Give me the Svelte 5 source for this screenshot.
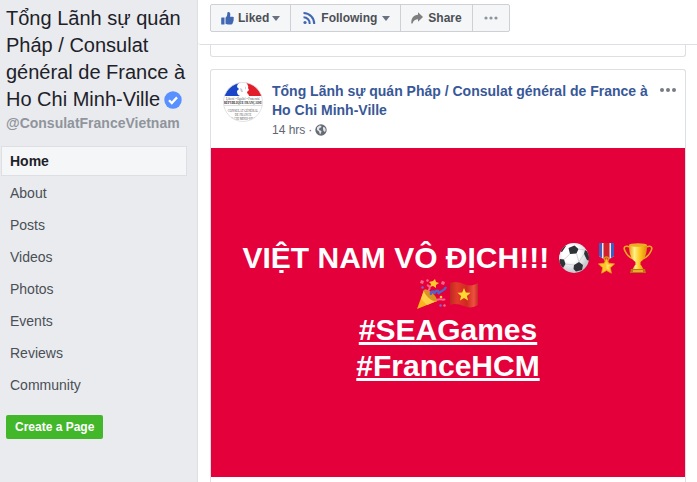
<script lang="ts">
	const pageName = 'Tổng Lãnh sự quán Pháp / Consulat général de France à Ho Chi Minh-Ville';
	const sections = ['Home', 'About', 'Posts', 'Videos', 'Photos', 'Events', 'Reviews', 'Community'];

	let current = $state('Home');
</script>

<svelte:head>
	<title>{pageName}</title>
</svelte:head>

<div class="page">
	<aside class="sidebar">
		<h1 class="page-name">
			{pageName}
			<svg class="verified" viewBox="0 0 18 18" role="img" aria-label="Verified">
				<circle cx="9" cy="9" r="8.7" fill="#5890ff" />
				<path d="M5 9.2l2.8 2.8 5.2-5.6" fill="none" stroke="#fff" stroke-width="2.3" />
			</svg>
		</h1>
		<a class="handle" href="#handle">@ConsulatFranceVietnam</a>

		<nav class="sections">
			{#each sections as section}
				<a
					href="#{section.toLowerCase()}"
					class="section"
					class:active={section === current}
					onclick={() => (current = section)}>{section}</a>
			{/each}
		</nav>

		<button type="button" class="create">Create a Page</button>
	</aside>

	<main class="main">
		<header class="toolbar">
			<div class="actions">
				<button type="button" class="action liked">
					<svg width="14" height="14" viewBox="0 0 14 14" fill="#4267b2" aria-hidden="true">
						<path d="M.8 6.500h2.700v7H.8q-.6 0-.6-.6V7.100q0-.6.6-.6z" />
						<path d="M4.500 6.800C6 5.700 6.300 4.200 6.300 2.300c0-1.900 3-1.700 3 .9 0 .9-.1 1.800-.3 2.500h2.600c1.500 0 1.700 1.800.7 2.300.8.6.6 1.700-.2 2 .5.7.2 1.600-.5 1.800.2.9-.4 1.700-1.300 1.700H7c-1 0-1.700-.4-2.500-.8z" />
					</svg>
					Liked
					<span class="caret"></span>
				</button>
				<button type="button" class="action following">
					<svg width="14" height="14" viewBox="0 0 14 14" fill="none" stroke="#4267b2" stroke-width="2" aria-hidden="true">
						<circle cx="3" cy="11.500" r="1.600" fill="#4267b2" stroke="none" />
						<path d="M1.500 6.300a6.200 6.200 0 0 1 6.200 6.700M1.500 2a10.600 10.600 0 0 1 10.700 11" />
					</svg>
					Following
					<span class="caret"></span>
				</button>
				<button type="button" class="action">
					<svg width="12" height="12" viewBox="0 0 12 12" fill="#7f7f7f" aria-hidden="true">
						<path d="M7 .3L12 5 7 9.700V7.200C4.500 7.200 2.400 8.500 1.500 11.500H.3C0 6.200 2.500 2.900 7 2.700z" />
					</svg>
					Share
				</button>
				<button type="button" class="action more" aria-label="More">
					<svg width="14" height="4" viewBox="0 0 14 4" fill="#8d949e" aria-hidden="true">
						<circle cx="2" cy="2" r="1.600" />
						<circle cx="7" cy="2" r="1.600" />
						<circle cx="12" cy="2" r="1.600" />
					</svg>
				</button>
			</div>
		</header>

		<div class="feed">
			<div class="previous"></div>

			<article class="post">
				<div class="post-header">
					<svg class="avatar" viewBox="0 0 40 40" aria-hidden="true">
						<defs>
							<clipPath id="round"><circle cx="20" cy="20" r="19.500" /></clipPath>
						</defs>
						<g clip-path="url(#round)">
							<rect width="40" height="40" fill="#fff" />
							<path d="M0 0h18c-3 1-4 3-4 5l2 2-2 2c0 3 1 4 3 5H0z" fill="#1c46c8" />
							<path d="M23 0h17v14H26c0-2-2-2-2-4l2-2-1-2c1-2-1-4-2-6z" fill="#e21e2b" />
							<path d="M17 6l2 1 1 3h-2zM22 4l1 2-1 2z" fill="#c4c9d3" />
							<text x="20" y="17.500" class="motto">Liberté • Égalité • Fraternité</text>
							<text x="20" y="22" class="republic">RÉPUBLIQUE FRANÇAISE</text>
							<path d="M1 23.500h38" stroke="#c8c8c8" stroke-width=".6" />
							<text x="20" y="30" class="office">CONSULAT GÉNÉRAL</text>
							<text x="20" y="34" class="office">DE FRANCE</text>
							<text x="20" y="38" class="office">HO CHI MINH-VILLE</text>
						</g>
						<circle cx="20" cy="20" r="19.500" fill="none" stroke="#dcdcdc" stroke-width=".8" />
					</svg>
					<div class="post-info">
						<a class="author" href="#author">{pageName}</a>
						<div class="meta">
							<a href="#post">14 hrs</a>
							<span>·</span>
							<svg width="12" height="12" viewBox="0 0 12 12" role="img" aria-label="Public">
								<circle cx="6" cy="6" r="5.700" fill="#666c76" />
								<path d="M2 3.500l2.500-2 2 .5-.5 1.500-1.500.5L4 6l2.500 1-.5 2-1 1.500-1-3-2-1.500zM8 3l2 .5.8 2.500-.8 2-1.500-1L8 5z" fill="#e4e6e9" />
							</svg>
						</div>
					</div>
					<button type="button" class="options" aria-label="Post options">
						<svg width="18" height="6" viewBox="0 0 18 6" fill="#777c85" aria-hidden="true">
							<circle cx="3" cy="3" r="2" />
							<circle cx="9" cy="3" r="2" />
							<circle cx="15" cy="3" r="2" />
						</svg>
					</button>
				</div>

				<div class="banner">
					<p class="message">
						VIỆT NAM VÔ ĐỊCH!!!
						<span class="emojis"><svg class="emoji" viewBox="0 0 32 32" role="img" aria-label="Soccer ball">
							<defs>
								<radialGradient id="ball" cx=".4" cy=".35" r=".7">
									<stop offset=".4" stop-color="#fff" />
									<stop offset="1" stop-color="#b9bdc3" />
								</radialGradient>
								<clipPath id="ball-edge"><circle cx="16" cy="16" r="15" /></clipPath>
							</defs>
							<circle cx="16" cy="16" r="15" fill="url(#ball)" />
							<g clip-path="url(#ball-edge)">
								<path d="M10.500 6l6-2.500L20.500 7l-2 4.500-6.500.5zM27 8l5 3v8l-3-1-3-6zM2 17l4 .5L7.500 22 5 26l-5-4zM16 23l5-3 4 3-1 5-6 1.500-2.500-2.500zM5 3l3 1-4 6-3-1z" fill="#2f3236" />
								<path d="M12 12l-6 5.500M18.500 11.500L21 20M20.500 7l6.500 1M7.500 22l8.500 1M26 12l-5 8M25 23l4-5" fill="none" stroke="#c9ccd0" stroke-width=".8" />
							</g>
						</svg><svg class="emoji" viewBox="0 0 32 32" role="img" aria-label="Medal">
							<path d="M9 1h15v13l-7.500 5L9 14z" fill="#e8eaf2" />
							<path d="M9 1h3v15l-3-2zM21 1h3v13l-3 2z" fill="#3d5fc0" />
							<path d="M13.500 1h6v16l-3 2-3-2z" fill="#d3202c" />
							<circle cx="16.500" cy="17" r="2" fill="none" stroke="#d59719" stroke-width="1.500" />
							<path d="M16.500 16.500l2.300 4.700 5.700.7-4.200 3.900 1.100 5.400-4.900-2.700-4.900 2.700 1.100-5.400-4.200-3.900 5.700-.7z" fill="#ffc629" stroke="#e9a113" stroke-width=".8" stroke-linejoin="round" />
							<path d="M16.500 20l1.200 2.500 3 .5-2.200 2 .5 3-2.500-1.500z" fill="#ffdf68" />
						</svg><svg class="emoji" viewBox="0 0 32 32" role="img" aria-label="Trophy">
							<defs>
								<linearGradient id="gold">
									<stop offset="0" stop-color="#e79c0b" />
									<stop offset=".3" stop-color="#fff087" />
									<stop offset=".6" stop-color="#ffc71f" />
									<stop offset="1" stop-color="#dc8f0a" />
								</linearGradient>
							</defs>
							<path d="M8 5C3 3 1 5 3 9c2 4 4 7 9 8M24 5c5-2 7 0 5 4-2 4-4 7-9 8" fill="none" stroke="#f0ad19" stroke-width="1.600" />
							<path d="M7 3h18c0 9-2 14-6.500 17v4h-5v-4C9 17 7 12 7 3z" fill="url(#gold)" />
							<ellipse cx="16" cy="3" rx="9" ry="1.800" fill="#e9ae25" />
							<path d="M13 23h6l3 5H10z" fill="url(#gold)" />
							<path d="M9 27h14l1 4H8z" fill="#b9770d" />
							<path d="M11 28h10v2H11z" fill="#e8ad2d" />
						</svg></span>
						<span class="emojis"><svg class="emoji" viewBox="0 0 32 32" role="img" aria-label="Party popper">
							<path d="M8 12L1 31l20-8z" fill="#f9b51e" />
							<path d="M8 12l-3 9 6 6 10-4z" fill="#ffcf45" />
							<ellipse cx="14.500" cy="17.500" rx="3" ry="8.500" transform="rotate(-48 14.500 17.500)" fill="#d99222" />
							<path d="M15 17c-1-4 4-5 3-1 2-5 6-4 4 0 3-4 6-2 8-7" fill="none" stroke="#4968cd" stroke-width="2.200" />
							<path d="M12 13c3-3 2-5-1-6M21 22c4-2 6 1 8-1" fill="none" stroke="#ff6290" stroke-width="2" />
							<path d="M19 1l1 3 3 1-3 2v3l-3-2-3 1 1-3-2-2 4-1z" fill="#ffc92c" />
							<path d="M5 2l3 1-1 3-3-1zM11 1l2 1-1 2-2-1zM26 3l3 1-1 3-3-1zM28 26l2 1-1 2-2-1z" fill="#ff668d" />
							<path d="M6 8l2 1-1 2-2-1zM24 26l2 1-1 2-2-1z" fill="#6f6ad7" />
							<circle cx="25" cy="19" r="1.300" fill="#ffd13a" />
						</svg><svg class="emoji" viewBox="0 0 32 32" role="img" aria-label="Flag of Vietnam">
							<defs>
								<linearGradient id="cloth">
									<stop offset="0" stop-color="#bd2a20" />
									<stop offset=".25" stop-color="#e33a2a" />
									<stop offset=".6" stop-color="#cf2a20" />
									<stop offset=".85" stop-color="#ee5140" />
									<stop offset="1" stop-color="#c52b22" />
								</linearGradient>
							</defs>
							<path d="M2 5c5-2 9-1 14 1s9 2 14-1v22c-5 3-9 3-14 1s-9-3-14-1z" fill="url(#cloth)" />
							<path d="M16 10l1.800 4.500 4.700.3-3.600 3.100 1.200 4.700-4.100-2.600-4.100 2.600 1.200-4.700-3.600-3.100 4.700-.3z" fill="#ffd832" />
						</svg></span>
						<a href="#seagames">#SEAGames</a>
						<a href="#francehcm">#FranceHCM</a>
					</p>
				</div>
			</article>
		</div>
	</main>
</div>

<style>
	:global(body) {
		margin: 0;
		background: #fff;
		font-family: "Liberation Sans", Arial, sans-serif;
		color: #1d2129;
	}

	a {
		color: inherit;
		text-decoration: none;
	}

	button {
		font-family: inherit;
		cursor: pointer;
	}

	.page {
		display: flex;
		min-height: 100vh;
	}

	.sidebar {
		flex: 0 0 198px;
		box-sizing: border-box;
		padding: 5px 10px 0 0;
		background: #e9ebee;
		border-right: 1px solid #dddfe4;
	}

	.page-name {
		margin: 0 0 0 6px;
		font-size: 20px;
		font-weight: 400;
		line-height: 27px;
	}

	.verified {
		width: 18px;
		height: 18px;
		margin-left: -2px;
		vertical-align: -3px;
	}

	.handle {
		display: block;
		margin-left: 6px;
		font-size: 14px;
		font-weight: 700;
		line-height: 20px;
		color: #90949c;
	}

	.sections {
		display: flex;
		flex-direction: column;
		gap: 2px;
		margin: 13px 0 15px 1px;
	}

	.section {
		padding: 0 8px;
		border: 1px solid transparent;
		font-size: 14px;
		line-height: 28px;
		color: #4b4f56;
	}

	.section.active {
		background: #f5f6f7;
		border-color: #dddfe2;
		font-weight: 700;
		color: #1d2129;
	}

	.create {
		display: block;
		height: 24px;
		margin-left: 6px;
		padding: 0 9px;
		background: #42b72a;
		border: 0;
		border-radius: 2px;
		font-size: 12px;
		font-weight: 700;
		color: #fff;
	}

	.main {
		flex: 1;
		min-width: 0;
		display: flex;
		flex-direction: column;
	}

	.toolbar {
		padding: 4px 12px 12px;
		border-bottom: 1px solid #dddfe2;
		border-bottom-left-radius: 3px;
	}

	.actions {
		display: inline-flex;
		vertical-align: top;
		border: 1px solid #ced0d4;
		border-radius: 2px;
		background: #f5f6f7;
	}

	.action {
		display: flex;
		align-items: center;
		gap: 5px;
		height: 26px;
		padding: 0 10px;
		background: none;
		border: 0;
		border-left: 1px solid #ced0d4;
		font-size: 12px;
		font-weight: 700;
		color: #4b4f56;
	}

	.action:first-child {
		border-left: 0;
	}

	.liked {
		gap: 3px;
	}

	.following {
		padding-left: 11px;
	}

	.more {
		padding: 0 11px;
	}

	.caret {
		border: 4px solid transparent;
		border-top: 5px solid #6a7180;
		border-bottom: 0;
	}

	.feed {
		flex: 1;
		display: flex;
		flex-direction: column;
		gap: 12px;
		padding: 0 11px 0 12px;
	}

	.previous {
		height: 11px;
		border: 1px solid #dddfe2;
		border-top: 0;
		border-radius: 0 0 3px 3px;
	}

	.post {
		flex: 1;
		border: 1px solid #dddfe2;
		border-bottom: 0;
		border-radius: 3px 3px 0 0;
	}

	.post-header {
		display: flex;
		align-items: flex-start;
		gap: 9px;
		padding: 12px 8px 8px 12px;
	}

	.avatar {
		flex: none;
		width: 40px;
		height: 40px;
	}

	.avatar text {
		text-anchor: middle;
		font-family: "Liberation Serif", serif;
		fill: #555;
	}

	.avatar .motto {
		font-size: 3px;
	}

	.avatar .republic {
		font-size: 3px;
		font-weight: 700;
		fill: #222;
	}

	.avatar .office {
		font-size: 3px;
	}

	.post-info {
		flex: 1;
	}

	.author {
		display: block;
		font-size: 14px;
		font-weight: 700;
		line-height: 19px;
		color: #385898;
	}

	.meta {
		display: flex;
		align-items: center;
		gap: 3px;
		font-size: 12px;
		line-height: 20px;
		color: #616770;
	}

	.options {
		display: flex;
		padding: 5px 0;
		background: none;
		border: 0;
	}

	.banner {
		display: flex;
		align-items: center;
		justify-content: center;
		box-sizing: border-box;
		min-height: 329px;
		padding-bottom: 2px;
		background: #e4003a;
		color: #fff;
	}

	.message {
		max-width: 420px;
		margin: 0;
		font-size: 30px;
		font-weight: 700;
		line-height: 36px;
		text-align: center;
	}

	.message a {
		display: block;
		text-decoration: underline;
	}

	.emojis {
		display: inline-flex;
		height: 36px;
		align-items: center;
		vertical-align: top;
	}

	.emoji {
		width: 32px;
		height: 32px;
	}
</style>
